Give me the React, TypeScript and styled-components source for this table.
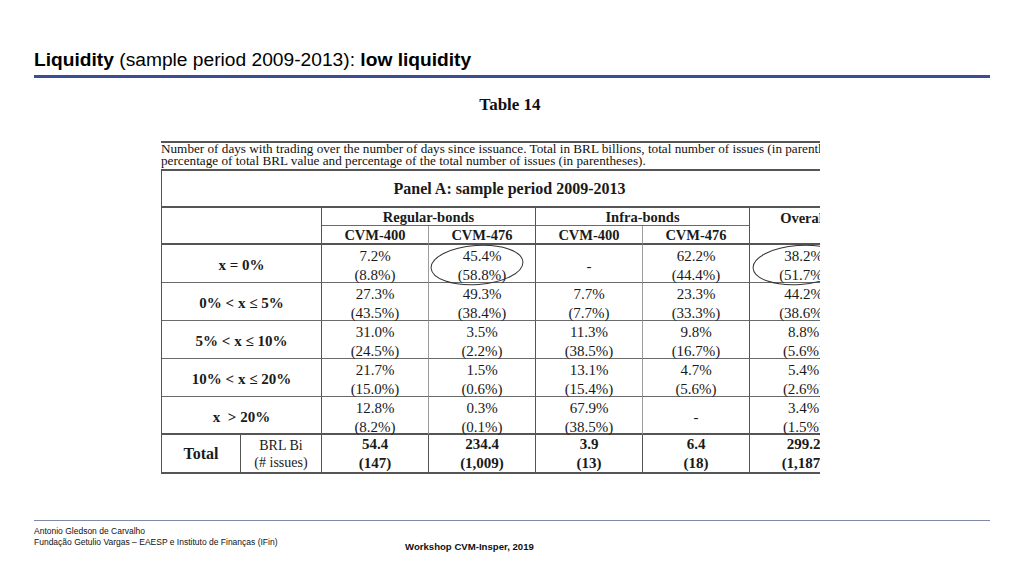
import React from "react";
import styled, { createGlobalStyle } from "styled-components";

const GlobalStyle = createGlobalStyle`
  html, body { margin: 0; padding: 0; background: #ffffff; }
  body { width: 1024px; height: 576px; overflow: hidden; }
  * { box-sizing: border-box; }
`;

const Page = styled.div`
  width: 1024px;
  height: 576px;
  display: flex;
  flex-direction: column;
  background: #ffffff;
`;

const Header = styled.header`
  padding: 49px 34px 0 34px;
`;

const Title = styled.h1`
  margin: 0;
  font-family: "Liberation Sans", Arial, sans-serif;
  font-size: 19.2px;
  line-height: 22px;
  font-weight: 400;
  color: #000;
  b { font-weight: 700; }
`;

const TitleRule = styled.div`
  margin-top: 4px;
  height: 3px;
  background: #3b4d95;
`;

const TableCaption = styled.div`
  margin-top: 17px;
  text-align: center;
  font-family: "Liberation Serif", "Times New Roman", serif;
  font-weight: 700;
  font-size: 17px;
  line-height: 20px;
  color: #111;
  padding-right: 4px;
`;

const TableWrap = styled.div`
  position: relative;
  margin-top: 26px;
  margin-left: 161px;
  width: 659px;
  overflow: hidden;
`;

const Description = styled.div`
  border-top: 2px solid #555;
  border-bottom: 2px solid #555;
  padding-bottom: 2px;
  font-family: "Liberation Serif", "Times New Roman", serif;
  font-size: 13.2px;
  line-height: 12px;
  color: #111;
  white-space: nowrap;
`;

const DescLine = styled.div``;

const Grid = styled.div`
  width: 696px;
  display: grid;
  grid-template-columns: 79px 81px 107px 107px 107px 107px 107px;
  grid-template-rows: 37px 18px 19px 38px 38px 38px 38px 38px 39px;
  border-left: 1px solid #555;
  font-family: "Liberation Serif", "Times New Roman", serif;
  color: #1a1a1a;
`;

type CellProps = {
  $col: string;
  $row: string;
  $right?: "dark" | "light" | "none";
  $bottom?: "thick" | "thin" | "none";
  $bold?: boolean;
  $size?: number;
  $top?: boolean;
  $shift?: number;
};

const Cell = styled.div<CellProps>`
  grid-column: ${(p) => p.$col};
  grid-row: ${(p) => p.$row};
  display: flex;
  flex-direction: column;
  justify-content: ${(p) => (p.$top ? "flex-start" : "center")};
  align-items: center;
  text-align: center;
  padding-top: ${(p) => p.$shift ?? 0}px;
  font-weight: ${(p) => (p.$bold ? 700 : 400)};
  font-size: ${(p) => p.$size ?? 15}px;
  line-height: ${(p) => (p.$top ? 20 : 19)}px;
  white-space: nowrap;
  border-right: ${(p) =>
    p.$right === "dark"
      ? "1px solid #555"
      : p.$right === "light"
      ? "1px solid #9c9c9c"
      : "none"};
  border-bottom: ${(p) =>
    p.$bottom === "thick"
      ? "2px solid #555"
      : p.$bottom === "thin"
      ? "1px solid #6a6a6a"
      : "none"};
`;

const SubLabel = styled.span`
  font-size: 14px;
  line-height: 17px;
  font-weight: 400;
`;

const Overlay = styled.svg`
  position: absolute;
  top: 0;
  left: 0;
  pointer-events: none;
`;

const Footer = styled.footer`
  margin-top: 46px;
  padding: 0 34px;
`;

const FooterRule = styled.div`
  height: 1px;
  background: #7d8ba6;
`;

const FooterBody = styled.div`
  display: grid;
  grid-template-columns: 371px auto;
  padding-top: 5px;
  font-family: "Liberation Sans", Arial, sans-serif;
  color: #111;
`;

const Credits = styled.div`
  font-size: 8.5px;
  line-height: 11px;
`;

const Event = styled.div`
  align-self: end;
  font-size: 9.6px;
  line-height: 11px;
  font-weight: 700;
  transform: translateY(4px);
`;

type RowData = {
  label: string;
  values: (string[] | null)[];
};

const rows: RowData[] = [
  {
    label: "x = 0%",
    values: [
      ["7.2%", "(8.8%)"],
      ["45.4%", "(58.8%)"],
      null,
      ["62.2%", "(44.4%)"],
      ["38.2%", "(51.7%)"],
    ],
  },
  {
    label: "0% < x ≤ 5%",
    values: [
      ["27.3%", "(43.5%)"],
      ["49.3%", "(38.4%)"],
      ["7.7%", "(7.7%)"],
      ["23.3%", "(33.3%)"],
      ["44.2%", "(38.6%)"],
    ],
  },
  {
    label: "5% < x ≤ 10%",
    values: [
      ["31.0%", "(24.5%)"],
      ["3.5%", "(2.2%)"],
      ["11.3%", "(38.5%)"],
      ["9.8%", "(16.7%)"],
      ["8.8%", "(5.6%)"],
    ],
  },
  {
    label: "10% < x ≤ 20%",
    values: [
      ["21.7%", "(15.0%)"],
      ["1.5%", "(0.6%)"],
      ["13.1%", "(15.4%)"],
      ["4.7%", "(5.6%)"],
      ["5.4%", "(2.6%)"],
    ],
  },
  {
    label: "x \u00a0> 20%",
    values: [
      ["12.8%", "(8.2%)"],
      ["0.3%", "(0.1%)"],
      ["67.9%", "(38.5%)"],
      null,
      ["3.4%", "(1.5%)"],
    ],
  },
];

const totals: string[][] = [
  ["54.4", "(147)"],
  ["234.4", "(1,009)"],
  ["3.9", "(13)"],
  ["6.4", "(18)"],
  ["299.2", "(1,187)"],
];

const rightFor = (i: number): "dark" | "light" | "none" =>
  i === 0 || i === 2 ? "light" : i === 4 ? "none" : "dark";

export default function App() {
  return (
    <Page>
      <GlobalStyle />
      <Header>
        <Title>
          <b>Liquidity</b> (sample period 2009-2013): <b>low liquidity</b>
        </Title>
        <TitleRule />
      </Header>

      <TableCaption>Table 14</TableCaption>

      <TableWrap>
        <Description>
          <DescLine>
            Number of days with trading over the number of days since issuance. Total in BRL billions, total number of issues (in parentheses),
          </DescLine>
          <DescLine>
            percentage of total BRL value and percentage of the total number of issues (in parentheses).
          </DescLine>
        </Description>

        <Grid>
          <Cell $col="1 / -1" $row="1" $bottom="thick" $bold $size={16}>
            Panel A: sample period 2009-2013
          </Cell>

          <Cell $col="1 / 3" $row="2 / 4" $right="dark" $bottom="thick" />
          <Cell $col="3 / 5" $row="2" $right="dark" $bottom="thin" $bold $size={14.5} $shift={1}>
            Regular-bonds
          </Cell>
          <Cell $col="5 / 7" $row="2" $right="dark" $bottom="thin" $bold $size={14.5} $shift={1}>
            Infra-bonds
          </Cell>
          <Cell $col="7" $row="2 / 4" $bottom="thick" $bold $size={14.5} $top>
            Overall
          </Cell>

          {["CVM-400", "CVM-476", "CVM-400", "CVM-476"].map((t, i) => (
            <Cell
              key={`h-${i}`}
              $col={`${i + 3}`}
              $row="3"
              $right={i % 2 === 0 ? "light" : "dark"}
              $bottom="thick"
              $bold
              $size={14.5}
              $shift={1}
            >
              {t}
            </Cell>
          ))}

          {rows.map((r, ri) => {
            const row = `${ri + 4}`;
            const bottom = ri === rows.length - 1 ? "thick" : "thin";
            return (
              <React.Fragment key={r.label}>
                <Cell $col="1 / 3" $row={row} $right="dark" $bottom={bottom} $bold $shift={4}>
                  {r.label}
                </Cell>
                {r.values.map((v, vi) => (
                  <Cell
                    key={`${ri}-${vi}`}
                    $col={`${vi + 3}`}
                    $row={row}
                    $right={rightFor(vi)}
                    $bottom={bottom}
                    $shift={5}
                  >
                    {v ? (
                      <>
                        <span>{v[0]}</span>
                        <span>{v[1]}</span>
                      </>
                    ) : (
                      <span>-</span>
                    )}
                  </Cell>
                ))}
              </React.Fragment>
            );
          })}

          <Cell $col="1" $row="9" $right="dark" $bottom="thick" $bold $size={16}>
            Total
          </Cell>
          <Cell $col="2" $row="9" $right="dark" $bottom="thick">
            <SubLabel>BRL Bi</SubLabel>
            <SubLabel>(# issues)</SubLabel>
          </Cell>
          {totals.map((t, ti) => (
            <Cell
              key={`t-${ti}`}
              $col={`${ti + 3}`}
              $row="9"
              $right={ti === 4 ? "none" : "dark"}
              $bottom="thick"
              $bold
            >
              <span>{t[0]}</span>
              <span>{t[1]}</span>
            </Cell>
          ))}
        </Grid>

        <Overlay width={659} height={340} viewBox="0 0 659 340">
          <ellipse
            cx={316}
            cy={124}
            rx={46}
            ry={19.5}
            fill="none"
            stroke="#333"
            strokeWidth={1}
            transform="rotate(-4 316 124)"
          />
          <ellipse
            cx={638}
            cy={124}
            rx={46}
            ry={19.5}
            fill="none"
            stroke="#333"
            strokeWidth={1}
            transform="rotate(-4 638 124)"
          />
        </Overlay>
      </TableWrap>

      <Footer>
        <FooterRule />
        <FooterBody>
          <Credits>
            <div>Antonio Gledson de Carvalho</div>
            <div>Fundação Getulio Vargas – EAESP e Instituto de Finanças (IFin)</div>
          </Credits>
          <Event>Workshop CVM-Insper, 2019</Event>
        </FooterBody>
      </Footer>
    </Page>
  );
}
